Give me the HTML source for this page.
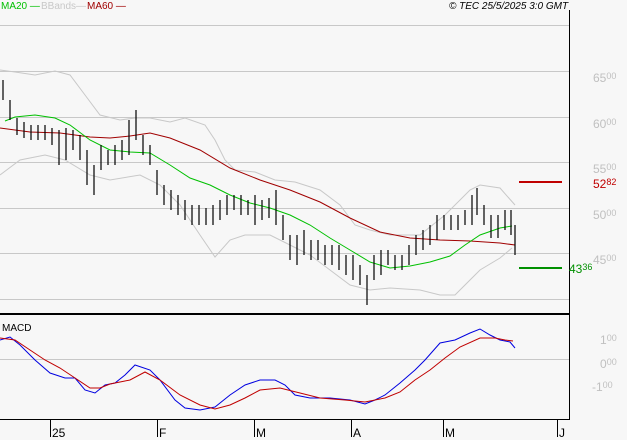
<!DOCTYPE html><html><head><style>body{margin:0;background:#f7f7f7}svg{display:block;font-family:"Liberation Sans",sans-serif}</style></head><body>
<svg width="627" height="440" viewBox="0 0 627 440">
<rect width="627" height="440" fill="#f7f7f7"/>
<g stroke="#c8c8c8" stroke-width="1">
<line x1="0" y1="25.5" x2="569" y2="25.5"/><line x1="0" y1="71.5" x2="569" y2="71.5"/><line x1="0" y1="117.5" x2="569" y2="117.5"/><line x1="0" y1="162.5" x2="569" y2="162.5"/><line x1="0" y1="208.5" x2="569" y2="208.5"/><line x1="0" y1="253.5" x2="569" y2="253.5"/><line x1="0" y1="299.5" x2="569" y2="299.5"/><line x1="0" y1="359.5" x2="569" y2="359.5"/>
</g>
<line x1="569.5" y1="10" x2="569.5" y2="419" stroke="#000"/>
<line x1="0" y1="314" x2="570" y2="314" stroke="#000" stroke-width="2"/>
<line x1="0" y1="419.5" x2="570" y2="419.5" stroke="#000"/>
<g stroke="#000"><line x1="50.5" y1="419" x2="50.5" y2="437"/><line x1="157.5" y1="419" x2="157.5" y2="437"/><line x1="254.5" y1="419" x2="254.5" y2="437"/><line x1="351.5" y1="419" x2="351.5" y2="437"/><line x1="443.5" y1="419" x2="443.5" y2="437"/><line x1="557.5" y1="419" x2="557.5" y2="437"/></g>
<g font-size="12" fill="#000"><text x="52" y="437">25</text><text x="159" y="437">F</text><text x="256" y="437">M</text><text x="353" y="437">A</text><text x="445" y="437">M</text><text x="559" y="437">J</text></g>
<g fill="none" stroke-width="1">
<polyline stroke="#c8c8c8" points="0,70 15,72 35,75 55,71 70,75 85,95 100,115 120,120 135,118 150,118 170,122 185,118 205,125 215,140 225,160 235,170 255,172 275,180 295,182 320,190 340,205 355,225 370,230 390,235 420,235 445,215 470,190 480,185 500,188 515,205"/>
<polyline stroke="#c8c8c8" points="0,175 20,160 45,155 65,160 90,175 110,180 140,175 160,185 180,205 200,235 215,257 230,240 245,235 270,235 290,245 310,255 330,270 350,285 370,290 390,288 420,290 440,295 455,295 470,280 480,270 500,258 512,248"/>
<polyline stroke="#a00000" points="0,128 30,132 60,133 90,137 110,138 130,136 150,133 170,138 200,150 230,168 260,180 290,190 320,202 350,218 380,232 410,238 440,240 470,241 500,243 515,245"/>
<polyline stroke="#00c000" points="5,121 15,117 35,115 55,118 70,125 90,140 110,150 130,152 150,153 170,165 190,178 210,185 230,195 250,203 270,208 290,215 310,225 330,238 350,250 370,262 390,268 410,266 430,262 450,256 465,245 480,235 500,228 512,226"/>
<path stroke="#000" stroke-width="1.2" d="M3 80V100M10 100V120M17 118V135M24 122V138M31 125V140M38 125V140M45 125V140M52 128V145M59 130V165M66 128V160M73 130V150M80 135V160M87 150V185M94 165V195M101 145V170M108 150V165M115 145V165M122 140V160M129 120V155M136 110V140M143 135V155M150 145V165M157 170V195M164 185V205M171 190V210M178 195V215M185 200V220M192 205V225M199 205V225M206 208V225M213 205V225M220 200V220M227 195V215M234 195V210M241 195V215M248 200V215M255 195V225M262 200V220M269 198V218M276 190V225M283 215V240M290 235V260M297 235V265M304 230V255M311 240V260M318 240V260M325 245V265M332 245V265M339 245V270M346 255V275M353 255V280M360 265V285M367 275V305M374 255V280M381 250V275M388 250V265M395 255V270M402 255V270M409 245V265M416 235V255M423 230V250M430 225V245M437 215V240M444 215V230M451 215V230M458 215V230M465 210V225M472 195V225M477 188V215M484 205V225M491 215V238M498 215V238M505 210V230M511 210V235M515 225V255"/>
<polyline stroke="#0000e0" points="0,340 10,337 20,345 35,360 50,373 65,378 75,378 85,390 95,393 105,385 115,383 125,375 135,365 150,370 160,380 175,400 185,408 200,410 215,407 230,395 245,385 260,380 275,380 285,385 295,395 310,398 330,398 350,400 365,404 375,400 385,395 400,383 415,370 425,360 440,343 455,340 470,333 480,329 490,335 500,340 510,342 515,348"/>
<polyline stroke="#c00000" points="0,338 15,340 30,350 45,360 60,368 75,378 90,388 100,388 110,384 120,382 130,380 145,372 160,380 180,395 200,405 215,409 230,405 245,398 260,390 280,388 300,393 320,398 345,400 365,402 385,398 400,392 415,380 430,370 445,358 460,347 480,338 495,338 505,340 513,341"/>
</g>
<line x1="519" y1="182" x2="562" y2="182" stroke="#c00000" stroke-width="2"/>
<line x1="519" y1="268" x2="562" y2="268" stroke="#009000" stroke-width="2"/>
<g font-size="12" fill="#c0c0c0">
<text x="593" y="82">65<tspan font-size="9" dy="-3">00</tspan></text>
<text x="593" y="128">60<tspan font-size="9" dy="-3">00</tspan></text>
<text x="593" y="173">55<tspan font-size="9" dy="-3">00</tspan></text>
<text x="593" y="219">50<tspan font-size="9" dy="-3">00</tspan></text>
<text x="593" y="264">45<tspan font-size="9" dy="-3">00</tspan></text>
<text x="600" y="344">1<tspan font-size="9" dy="-3">00</tspan></text>
<text x="600" y="368">0<tspan font-size="9" dy="-3">00</tspan></text>
<text x="592" y="391">-1<tspan font-size="9" dy="-3">00</tspan></text>
</g>
<text x="593" y="188" font-size="12" fill="#c00000">52<tspan font-size="9" dy="-3">82</tspan></text>
<text x="569" y="273" font-size="12" fill="#009000">43<tspan font-size="9" dy="-3">36</tspan></text>
<g font-size="10">
<text x="1" y="9" fill="#00c000">MA20 —</text><text x="41" y="9" fill="#c8c8c8">BBands—</text><text x="87" y="9" fill="#a00000">MA60 —</text>
<text x="449" y="9" fill="#000" font-style="italic">© TEC 25/5/2025 3:0 GMT</text>
</g>
<text x="2" y="331" font-size="10" fill="#000">MACD</text>
</svg></body></html>
